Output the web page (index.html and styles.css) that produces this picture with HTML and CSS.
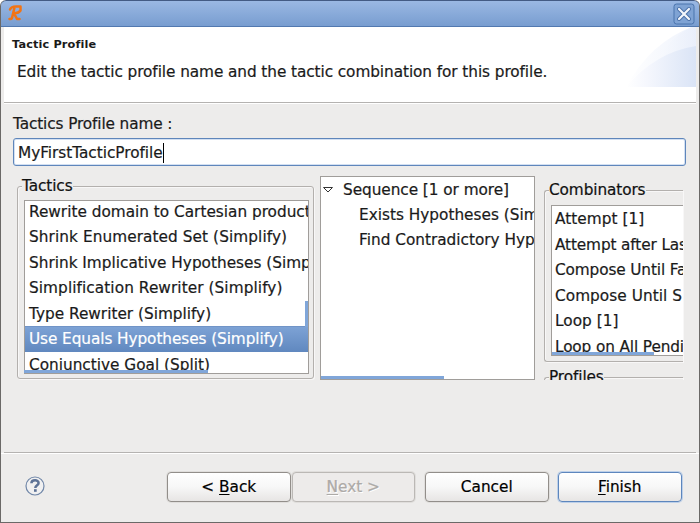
FILE: index.html
```html
<!DOCTYPE html>
<html lang="en">
<head>
<meta charset="utf-8">
<title>Tactic Profile</title>
<link rel="stylesheet" href="styles.css">
</head>
<body>
<div class="window">
  <header class="titlebar">
    <svg class="logo" width="14" height="16" viewBox="0 0 14 16"><path d="M2 4.5C3 2 5 1.5 8 1.5H12.5V5.5Q11 8 6 8.3L9 14H11.5M6.5 2.5L4 13Q3.5 14.3 1.5 14" fill="none" stroke="#f27414" stroke-width="2.5" stroke-linecap="round" stroke-linejoin="round"/></svg>
    <button class="close" aria-label="Close"><svg width="22" height="22" viewBox="0 0 22 22"><rect x="1" y="1" width="20" height="20" rx="2.5" fill="#7fa3d4" stroke="#4a74ad"/><path d="M6 6L16 16M16 6L6 16" stroke="#4a70a8" stroke-width="4" stroke-linecap="round"/><path d="M6 6L16 16M16 6L6 16" stroke="#f4f7fc" stroke-width="2.2" stroke-linecap="round"/></svg></button>
  </header>
  <section class="banner">
    <div class="heading">
      <h1>Tactic Profile</h1>
      <p>Edit the tactic profile name and the tactic combination for this profile.</p>
    </div>
    <svg class="swoosh" width="70" height="60" viewBox="0 0 70 60">
      <defs>
        <linearGradient id="a"><stop offset="0" stop-color="#fff"/><stop offset="1" stop-color="#e7edfa"/></linearGradient>
        <linearGradient id="b"><stop offset="0" stop-color="#fff"/><stop offset=".3" stop-color="#f5f7fd"/><stop offset="1" stop-color="#dae4f6"/></linearGradient>
      </defs>
      <path d="M0 60Q25 15 66 0H70V60Z" fill="url(#a)" opacity=".7"/>
      <path d="M18 60Q35 15 65 0H70V60Z" fill="url(#a)" opacity=".7"/>
      <path d="M0 60Q30 25 70 19V60Z" fill="url(#b)"/>
    </svg>
  </section>
  <main class="content">
    <label class="name-label" for="name">Tactics Profile name :</label>
    <div class="field" id="name"><span>MyFirstTacticProfile</span><i class="caret"></i></div>
    <div class="panes">
      <section class="group tactics">
        <h2>Tactics</h2>
        <ul class="list">
          <li>Rewrite domain to Cartesian product</li>
          <li class="wide">Shrink Enumerated Set (Simplify)</li>
          <li>Shrink Implicative Hypotheses (Simplify)</li>
          <li class="wide">Simplification Rewriter (Simplify)</li>
          <li>Type Rewriter (Simplify)</li>
          <li class="selected">Use Equals Hypotheses (Simplify)</li>
          <li>Conjunctive Goal (Split)</li>
        </ul>
        <i class="hbar"></i><i class="vbar"></i>
      </section>
      <section class="tree">
        <ul class="list">
          <li class="root"><svg width="12" height="8" viewBox="0 0 12 8"><path d="M1.5 1.5H10.5L6 6Z" fill="#fff" stroke="#333"/></svg><span>Sequence [1 or more]</span></li>
          <li class="child">Exists Hypotheses (Sim</li>
          <li class="child">Find Contradictory Hyp</li>
        </ul>
        <i class="hbar"></i>
      </section>
      <div class="side">
        <section class="group combinators">
          <h2>Combinators</h2>
          <ul class="list">
            <li>Attempt [1]</li>
            <li class="tight">Attempt after Las</li>
            <li class="tight">Compose Until Fa</li>
            <li>Compose Until S</li>
            <li>Loop [1]</li>
            <li class="tight">Loop on All Pendi</li>
          </ul>
          <i class="hbar"></i>
        </section>
        <section class="group profiles"><h2>Profiles</h2></section>
      </div>
    </div>
  </main>
  <footer class="actions">
    <svg class="help" width="20" height="20" viewBox="0 0 20 20"><circle cx="10" cy="10" r="9" fill="#f0f0f1" stroke="#7187a8" stroke-width="1.2"/><path d="M6.4 7.3C6.5 3.4 13.6 3.4 13.6 7C13.6 9.3 10.3 9.1 10.3 12" fill="none" stroke="#5d7296" stroke-width="2.5"/><rect x="9" y="13.2" width="2.7" height="2.6" fill="#5d7296"/></svg>
    <button class="btn back"><span>&lt; <u>B</u>ack</span></button>
    <button class="btn next" disabled><span><u>N</u>ext &gt;</span></button>
    <button class="btn cancel"><span>Cancel</span></button>
    <button class="btn finish"><span><u>F</u>inish</span></button>
  </footer>
</div>
</body>
</html>
```

FILE: styles.css
```css
* { box-sizing: border-box; }
body { margin: 0; background: #fff; font: 15.3px/20px "DejaVu Sans", sans-serif; color: #1a1a1a; -webkit-text-stroke: .2px; }
h1, h2, p, ul { margin: 0; padding: 0; }
ul { list-style: none; }
.window { width: 700px; height: 523px; display: flex; flex-direction: column; overflow: hidden; background: #edeceb; border: 1px solid #6b6967; border-top: 0; border-radius: 6px 6px 0 0; }
.titlebar { height: 27px; flex: none; margin: 0 -1px; padding: 0 4px 0 7px; display: flex; align-items: center; justify-content: space-between; background: linear-gradient(#9ab8e3, #789dd0); border: 1px solid #4b6c9d; border-top: 1px solid #435b84; border-bottom: 1px solid #5279b0; border-radius: 6px 6px 0 0; }
.logo { margin-top: -1px; }
.close { width: 22px; height: 22px; padding: 0; border: 0; background: none; }
.close svg { display: block; }
.banner { height: 76px; flex: none; margin: 0 3px; padding-left: 8px; display: flex; justify-content: space-between; background: #fff; border-bottom: 1px solid #b4b2b0; }
.heading { white-space: nowrap; }
h1 { margin-top: 9px; font-size: 11.3px; line-height: 18px; letter-spacing: .13px; -webkit-text-stroke: 0; }
.heading p { margin: 8px 0 0 5px; letter-spacing: -.075px; }
.content { height: 350px; flex: none; margin: 0 3px; padding: 10px 10px 0 9px; border-top: 1px solid #fff; border-bottom: 1px solid #b5b3b1; }
.name-label { display: block; white-space: nowrap; letter-spacing: -.12px; }
.field { height: 28px; margin-top: 4px; padding: 1px 4px 0; display: flex; align-items: center; background: #fff; border: 1px solid #5f86bb; box-shadow: inset 0 0 0 1px #d3e0f2; border-radius: 3px; }
.field span { letter-spacing: -.03px; }
.caret { width: 1px; height: 20px; background: #000; }
.panes { height: 204px; margin-top: 10px; padding: 0 3px 0 4px; display: flex; overflow: hidden; }
.group { position: relative; border: 1px solid #b3b0ad; box-shadow: inset 1px 1px #f8f7f7, 1px 1px #f8f7f7; border-radius: 3px; }
h2 { position: absolute; top: -11px; left: 4px; font: inherit; line-height: 20px; white-space: nowrap; letter-spacing: -.1px; background: #edeceb; color: #111; }
.list { overflow: hidden; background: #fff; border: 1px solid #a09d9a; }
.list li { height: 25.5px; padding: 1px 0 0 4px; line-height: 25.5px; white-space: nowrap; }
.tactics { width: 297px; height: 193px; flex: none; margin-top: 10px; padding: 13px 4px 0 6px; }
.tactics .list { height: 174px; }
.tactics .wide { letter-spacing: .08px; }
.tactics li:first-child { height: 23px; line-height: 21px; }
.list .selected { color: #fff; letter-spacing: -.08px; padding-top: 0; background: linear-gradient(#7da2d5, #6088bf); border-top: 1px solid #7194c7; line-height: 24px; }
.hbar { position: absolute; height: 3px; background: #80a6d9; }
.tactics .hbar { left: 6px; bottom: 5px; width: 184px; }
.vbar { position: absolute; right: 5px; top: 114px; width: 3px; height: 26px; background: #80a6d9; }
.tree { position: relative; width: 215px; flex: none; margin-left: 6px; }
.tree .list { height: 204px; }
.tree .root { display: flex; align-items: center; padding-left: 1px; gap: 9px; letter-spacing: -.05px; }
.tree .child { padding: 0 0 0 38px; }
.tree .hbar { left: 1px; bottom: 1px; width: 123px; }
.side { width: 139px; flex: none; margin-left: 9px; padding-top: 14px; }
.side .group { border-right: 0; border-radius: 3px 0 0 3px; }
.combinators { height: 172px; padding: 14px 0 0 6px; }
.side .list { height: 151px; border-right: 0; }
.side .list li { padding-left: 3px; letter-spacing: .05px; }
.side .list .tight { letter-spacing: -.12px; }
.combinators .hbar { left: 7px; bottom: 6px; width: 102px; }
.profiles { height: 40px; margin-top: 15px; }
.actions { height: 69px; flex: none; padding: 18px 17px 0 25px; border-top: 1px solid #fff; display: flex; align-items: flex-start; }
.help { flex: none; margin: 4px 122px 0 -1px; }
.btn { width: 123.5px; height: 30px; flex: none; padding: 0; font: inherit; letter-spacing: 0; color: #000; background: linear-gradient(#fff, #f7f7f7 50%, #e7e5e4); border: 1px solid #928e8a; border-radius: 4px; box-shadow: 0 0 0 1px #e0dedc; }
.btn u { text-underline-offset: 2px; text-decoration-thickness: 1px; text-decoration-skip-ink: none; }
.next { margin-left: 1px; color: #adaaa7; background: #edebea; border-color: #bbb8b5; }
.next span { text-shadow: 1px 1px #fff; }
.cancel { margin-left: 10px; }
.finish { margin-left: 9.5px; border-color: #5d86bd; box-shadow: 0 0 0 1px #bdd0e9; }
```
